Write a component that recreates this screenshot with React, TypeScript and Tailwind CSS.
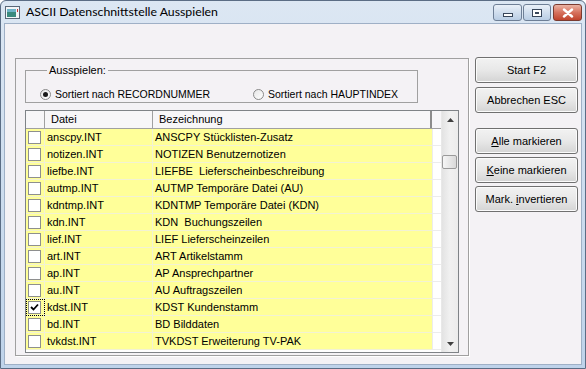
import React from 'react';

// Tabellen-Daten
const rows = [
  { file: 'anscpy.INT', label: 'ANSCPY Stücklisten-Zusatz' },
  { file: 'notizen.INT', label: 'NOTIZEN Benutzernotizen' },
  { file: 'liefbe.INT', label: 'LIEFBE  Lieferscheinbeschreibung' },
  { file: 'autmp.INT', label: 'AUTMP Temporäre Datei (AU)' },
  { file: 'kdntmp.INT', label: 'KDNTMP Temporäre Datei (KDN)' },
  { file: 'kdn.INT', label: 'KDN  Buchungszeilen' },
  { file: 'lief.INT', label: 'LIEF Lieferscheinzeilen' },
  { file: 'art.INT', label: 'ART Artikelstamm' },
  { file: 'ap.INT', label: 'AP Ansprechpartner' },
  { file: 'au.INT', label: 'AU Auftragszeilen' },
  { file: 'kdst.INT', label: 'KDST Kundenstamm', checked: true, focus: true },
  { file: 'bd.INT', label: 'BD Bilddaten' },
  { file: 'tvkdst.INT', label: 'TVKDST Erweiterung TV-PAK' },
];

function Checkbox({ checked }: { checked?: boolean }) {
  return (
    <div className="w-[13px] h-[13px] border border-[#8e8f8f] bg-white flex items-center justify-center">
      {checked && (
        <svg width="9" height="9" viewBox="0 0 9 9">
          <path d="M1 4 L3.5 6.5 L8 1.5" stroke="#000" strokeWidth="1.8" fill="none" />
        </svg>
      )}
    </div>
  );
}

function Radio({ checked }: { checked?: boolean }) {
  return (
    <div className="w-[11px] h-[11px] rounded-full border border-[#8a8a8a] bg-gradient-to-br from-[#e6e6e6] to-white flex items-center justify-center">
      {checked && <div className="w-[5px] h-[5px] rounded-full bg-[#1a1a1a]" />}
    </div>
  );
}

function Btn({ children, className = '' }: { children: React.ReactNode; className?: string }) {
  return (
    <div
      className={`h-[26px] w-[103px] rounded-[3px] border border-[#707070] bg-gradient-to-b from-[#f2f2f2] via-[#e8e8e8] to-[#d4d4d4] shadow-[inset_0_0_0_1px_#fbfbfb] flex items-center justify-center text-black ${className}`}
    >
      {children}
    </div>
  );
}

export default function App() {
  return (
    <div
      className="w-[586px] h-[369px] flex flex-col border border-[#5b6d85] rounded-t-[6px] bg-gradient-to-b from-[#dce7f3] to-[#bfd3ea] text-[11px] text-black"
      style={{ fontFamily: '"Liberation Sans", Arial, sans-serif' }}
    >
      {/* Titelleiste */}
      <div className="h-[22px] flex items-center pl-[4px] pr-[3px]">
        <svg width="15" height="13" viewBox="0 0 15 13" className="mr-[6px]">
          <rect x="0.5" y="0.5" width="14" height="12" fill="#f4f6f8" stroke="#5a6878" />
          <rect x="2" y="3" width="9" height="8" fill="#3b8a7e" />
          <rect x="2" y="3" width="9" height="3" fill="#6fb4c8" />
          <rect x="12" y="3" width="1" height="3" fill="#d03030" />
        </svg>
        <span className="text-[12.3px] text-black" style={{ fontFamily: 'Lato, "Noto Sans", sans-serif' }}>
          ASCII Datenschnittstelle Ausspielen
        </span>
        <div className="ml-auto flex items-start gap-[1px] self-start mt-[3px]">
          <div className="w-[29px] h-[17px] rounded-[3px] border border-[#6e7f96] bg-gradient-to-b from-[#e9f0f8] to-[#b9cde4] flex items-center justify-center">
            <div className="w-[10px] h-[4px] border border-[#38465a] bg-white mt-[5px]" />
          </div>
          <div className="w-[28px] h-[17px] rounded-[3px] border border-[#6e7f96] bg-gradient-to-b from-[#e9f0f8] to-[#b9cde4] flex items-center justify-center">
            <div className="w-[10px] h-[8px] border border-[#38465a] bg-white flex items-center justify-center">
              <div className="w-[4px] h-[2px] border border-[#38465a]" />
            </div>
          </div>
          <div className="ml-[1px] w-[29px] h-[17px] rounded-[3px] border border-[#7a3b30] bg-gradient-to-b from-[#eab3a4] via-[#d6715d] to-[#c0432c] flex items-center justify-center">
            <svg width="12" height="10" viewBox="0 0 12 10">
              <path d="M2 1.5 L10 8.5 M10 1.5 L2 8.5" stroke="#fff" strokeWidth="2.4" strokeLinecap="round" />
            </svg>
          </div>
        </div>
      </div>

      {/* Client-Bereich */}
      <div className="flex-1 mx-[3px] mb-[3px] bg-[#f4f2f5] border border-[#9fb0c6] flex items-start pt-[34px] pl-[10px]">
        {/* Rahmen links */}
        <div className="w-[454px] h-[298px] border border-[#a0a0a0] shadow-[1px_1px_0_#ffffff] pt-[5px] pl-[9px]">
          <fieldset className="w-[393px] border border-[#a0a0a0] pt-[11px] pb-[1px] pl-[14px]">
            <legend className="ml-[7px] px-[2px] leading-[13px]">Ausspielen:</legend>
            <div className="flex items-center h-[13px] text-[10.5px]">
              <div className="w-[213px] flex items-center gap-[4px]">
                <Radio checked />
                <span>Sortiert nach RECORDNUMMER</span>
              </div>
              <div className="flex items-center gap-[4px]">
                <Radio />
                <span>Sortiert nach HAUPTINDEX</span>
              </div>
            </div>
          </fieldset>

          {/* Tabelle */}
          <div className="mt-[7px] w-[434px] h-[243px] border border-[#7f8387] bg-white flex overflow-hidden">
            <div className="w-[415px] flex flex-col">
              <div className="h-[18px] flex bg-[#f7f6f8] border-b border-[#a0a0a0]">
                <div className="w-[19px] border-r border-[#a0a0a0]" />
                <div className="w-[108px] border-r border-[#a0a0a0] pl-[6px] flex items-center">Datei</div>
                <div className="w-[279px] border-r-2 border-[#8c8c8c] pl-[6px] flex items-center">Bezeichnung</div>
                <div className="w-[9px]" />
              </div>
              {rows.map((r) => (
                <div key={r.file} className="h-[17px] flex shrink-0">
                  <div
                    className={`w-[19px] bg-[#ffff99] border-b border-r border-[#f2f2d4] flex items-center pl-[2px] ${
                      r.focus ? 'outline outline-1 outline-dotted outline-black -outline-offset-1' : ''
                    }`}
                  >
                    <Checkbox checked={r.checked} />
                  </div>
                  <div className="w-[108px] bg-[#ffff99] border-b border-r border-[#f2f2d4] pl-[2px] flex items-center whitespace-pre">
                    {r.file}
                  </div>
                  <div className="w-[279px] bg-[#ffff99] border-b border-[#f2f2d4] pl-[2px] flex items-center whitespace-pre">
                    {r.label}
                  </div>
                  <div className="w-[9px] bg-white border-b border-l border-[#ececec]" />
                </div>
              ))}
            </div>

            {/* Scrollbar */}
            <div className="w-[17px] flex flex-col bg-gradient-to-r from-[#e3e3e3] via-[#f1f1f1] to-[#ececec] border-l border-[#e8e8e8]">
              <div className="h-[17px] flex items-center justify-center">
                <svg width="7" height="4" viewBox="0 0 7 4">
                  <path d="M0 4 L3.5 0 L7 4 Z" fill="#404040" />
                </svg>
              </div>
              <div className="mt-[27px] h-[14px] w-[15px] rounded-[2px] border border-[#9a9a9a] bg-gradient-to-r from-[#f6f6f6] to-[#d9d9d9]" />
              <div className="mt-auto h-[17px] flex items-center justify-center">
                <svg width="7" height="4" viewBox="0 0 7 4">
                  <path d="M0 0 L3.5 4 L7 0 Z" fill="#404040" />
                </svg>
              </div>
            </div>
          </div>
        </div>

        {/* Knöpfe rechts */}
        <div className="ml-[6px] -mt-px flex flex-col">
          <Btn>Start F2</Btn>
          <Btn className="mt-[4px]">Abbrechen ESC</Btn>
          <Btn className="mt-[15px]">
            <span><u>A</u>lle markieren</span>
          </Btn>
          <Btn className="mt-[3px]">
            <span><u>K</u>eine markieren</span>
          </Btn>
          <Btn className="mt-[3px]">
            <span>Mark. <u>i</u>nvertieren</span>
          </Btn>
        </div>
      </div>
    </div>
  );
}
